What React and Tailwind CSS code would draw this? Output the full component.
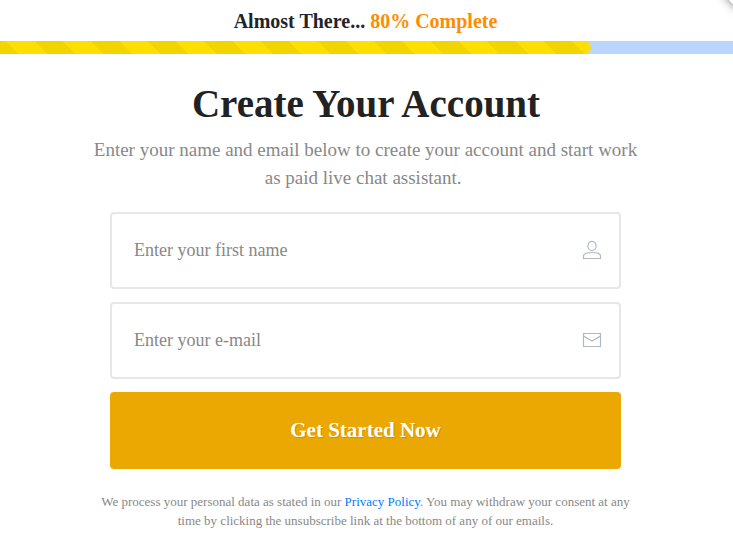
import { useState } from "react";

export default function App() {
  const [name, setName] = useState("");
  const [email, setEmail] = useState("");

  return (
    <div className="relative h-[544px] w-[733px] overflow-hidden bg-white font-['Liberation_Serif',serif]">
      <div className="absolute -top-[15px] -right-[15px] h-5 w-5 rotate-45 bg-white shadow-[0_0_10px_rgba(0,0,0,0.5)]" />
      <p className="h-[41px] pt-[1px] pr-[2px] text-center text-[20px] leading-[40px] font-bold text-[#212529]">
        Almost There... <span className="text-[#ff8c00]">80% Complete</span>
      </p>
      <div className="h-[13px] bg-[#b9d6ff]">
        <div className="h-full w-[591px] rounded-r-full bg-[repeating-linear-gradient(45deg,#f2d400_0px,#f2d400_13.4px,#ffdf00_13.4px,#ffdf00_33.4px,#f2d400_33.4px,#f2d400_40px)]" />
      </div>
      <h1 className="mt-[25px] pr-[1px] text-center text-[39px] leading-[50px] font-bold text-[#222]">
        Create Your Account
      </h1>
      <p className="mt-[7px] pr-[2px] text-center text-[19px] leading-[28px] text-[#888]">
        Enter your name and email below to create your account and start work
        <br />
        as paid live chat assistant.&nbsp;
      </p>
      <form className="mt-[20px] ml-[110px] flex w-[511px] flex-col gap-[13px]">
        <label className="flex h-[77px] items-center rounded border-2 border-[#e7e7e7] pr-[17px] pl-[22px]">
          <input
            className="h-full flex-1 text-[18px] outline-none placeholder:text-[#888]"
            placeholder="Enter your first name"
            value={name}
            onChange={(e) => setName(e.target.value)}
          />
          <svg className="mb-px h-5 w-5" viewBox="0 0 20 20" fill="none" stroke="#b0b7c2" strokeWidth="1.2">
            <ellipse cx="10" cy="5.9" rx="4.1" ry="4.6" />
            <path d="M1.5 18.5v-2.5q0-3.5 8.5-3.5t8.5 3.5v2.5z" />
          </svg>
        </label>
        <label className="flex h-[77px] items-center rounded border-2 border-[#e7e7e7] pr-[17px] pl-[22px]">
          <input
            className="h-full flex-1 text-[18px] outline-none placeholder:text-[#888]"
            placeholder="Enter your e-mail"
            value={email}
            onChange={(e) => setEmail(e.target.value)}
          />
          <svg className="mb-px h-5 w-5" viewBox="0 0 20 20" fill="none" stroke="#b0b7c2" strokeWidth="1.2">
            <path d="M1.5 3.5h17v13h-17zM1.5 6l8.5 5 8.5-5" />
          </svg>
        </label>
        <button
          type="button"
          className="h-[77px] rounded bg-[#eca802] text-[21px] font-bold text-white [text-shadow:1px_1px_1px_rgba(0,0,0,0.15)]"
        >
          Get Started Now
        </button>
      </form>
      <p className="mt-[23px] pr-[2px] text-center text-[13px] leading-[19px] text-[#888]">
        We process your personal data as stated in our{" "}
        <a className="text-[#007bff]">Privacy Policy</a>. You may withdraw your consent at any
        <br />
        time by clicking the unsubscribe link at the bottom of any of our emails.
      </p>
    </div>
  );
}
